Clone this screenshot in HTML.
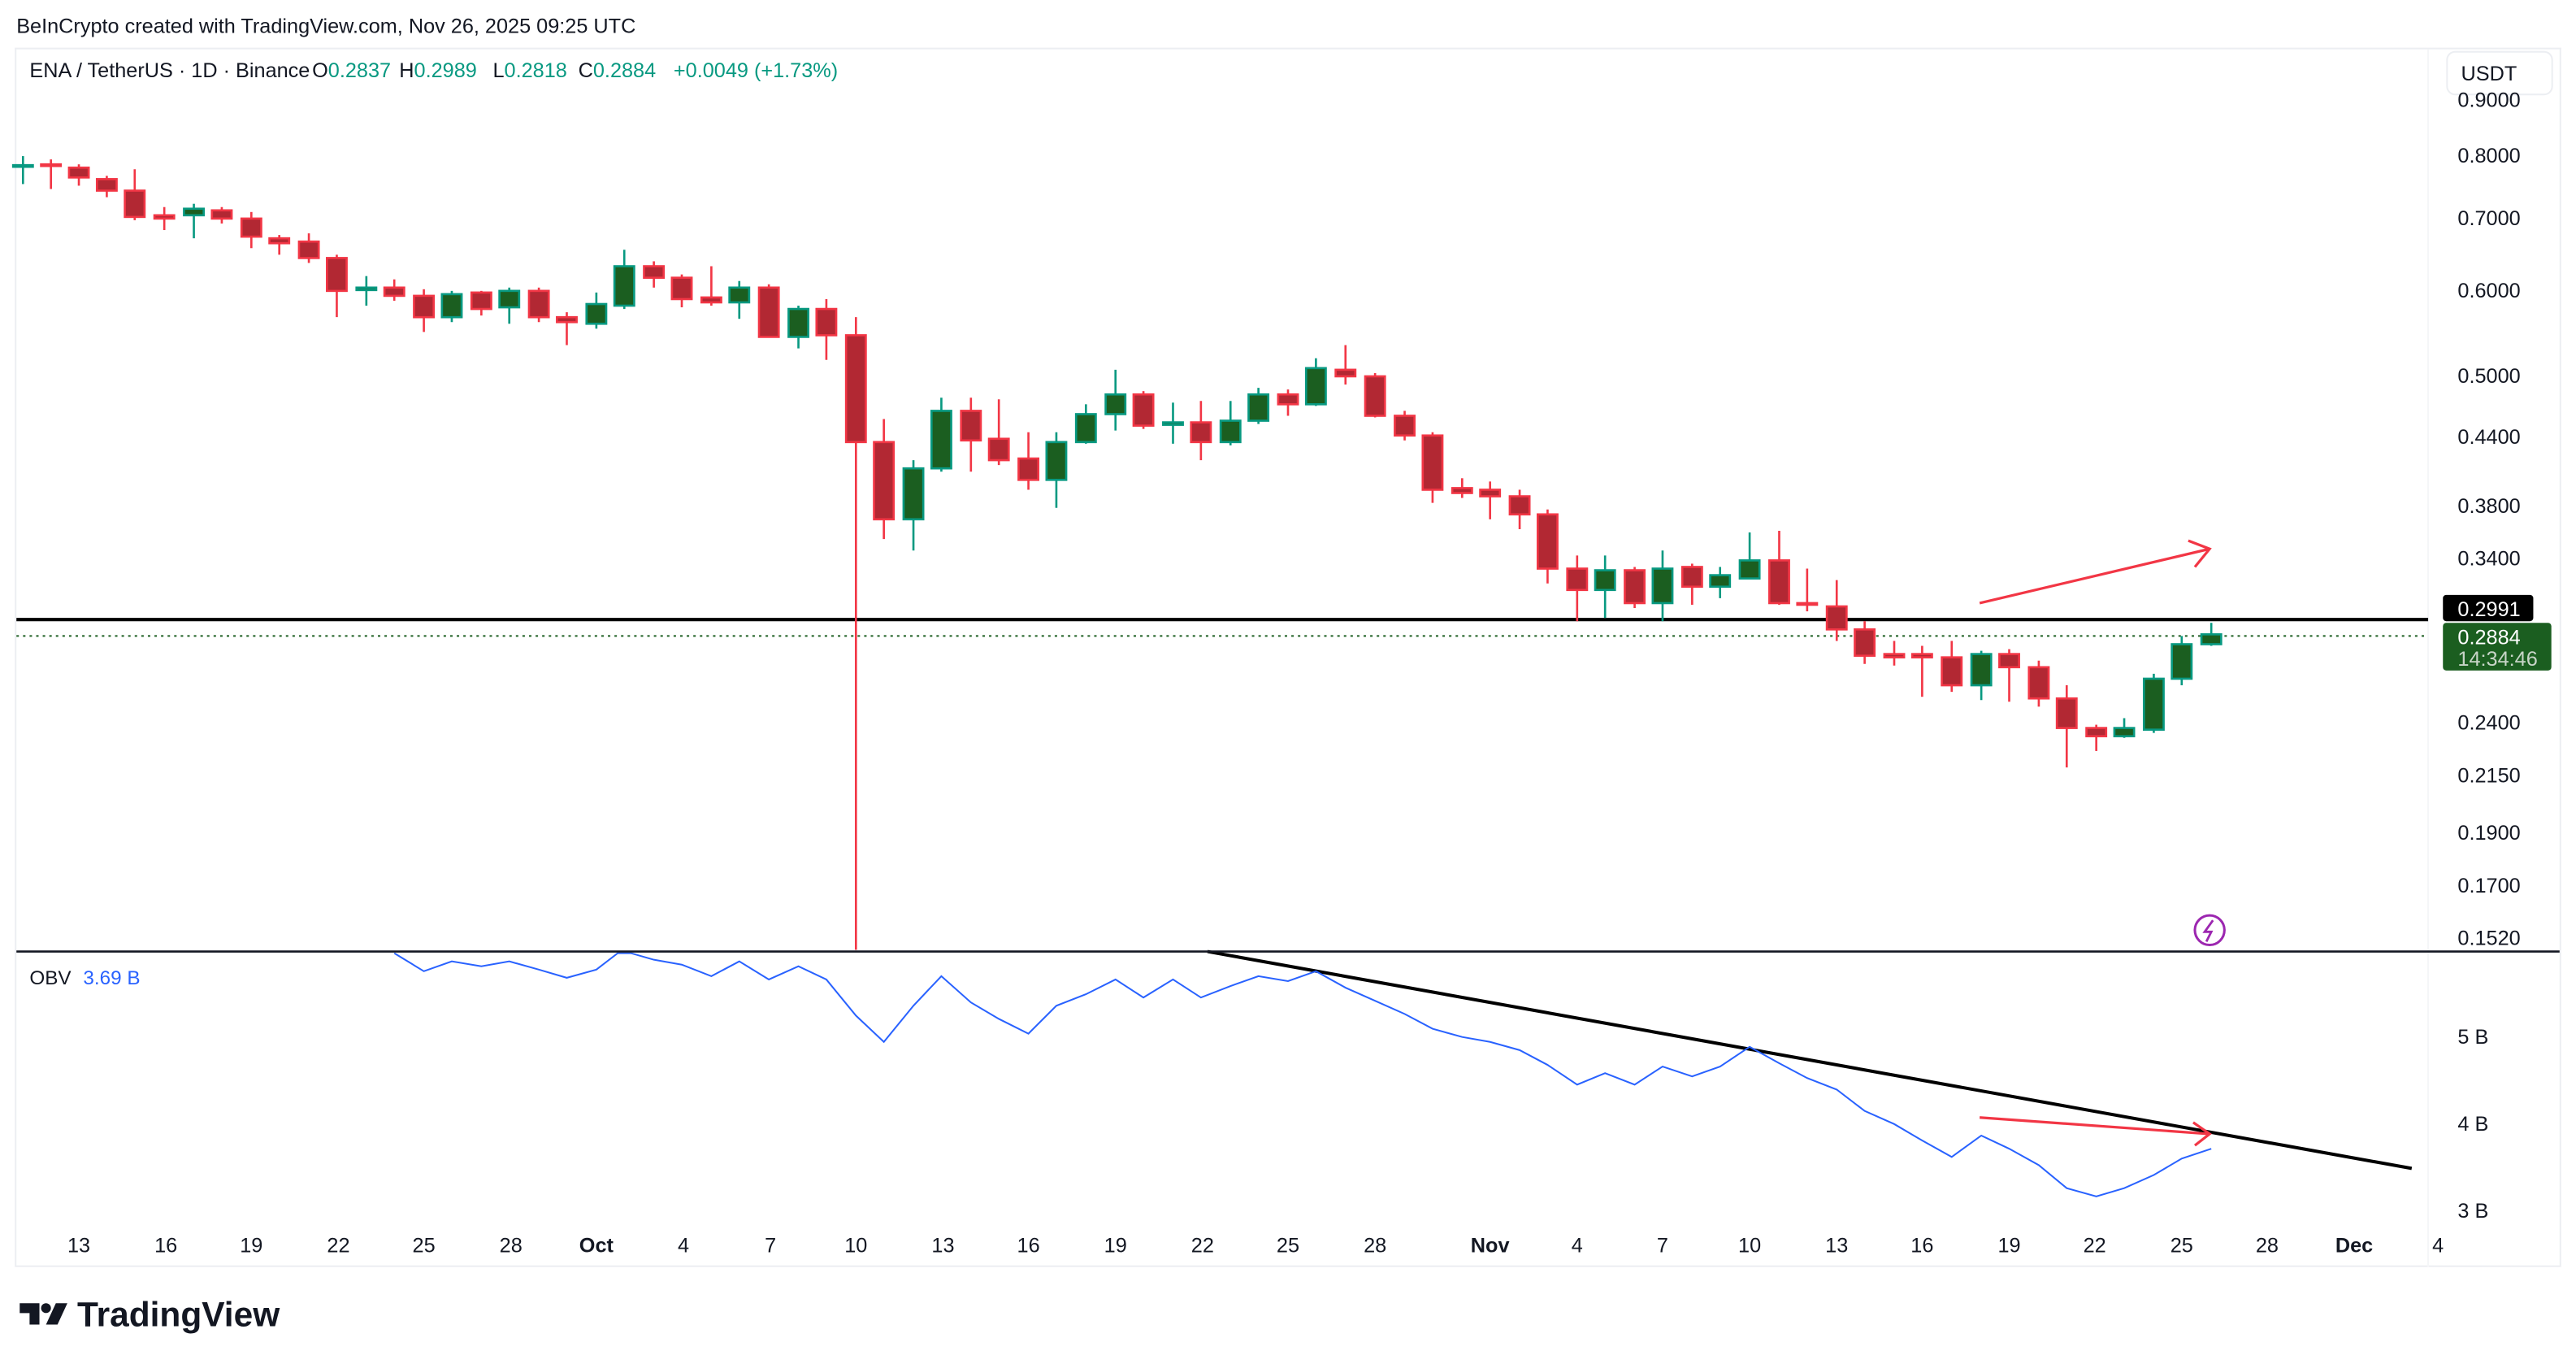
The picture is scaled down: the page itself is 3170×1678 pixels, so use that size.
<!DOCTYPE html>
<html><head><meta charset="utf-8"><style>
html,body{margin:0;padding:0;background:#fff;}
svg{display:block}
text{font-family:"Liberation Sans",sans-serif;}
.r line{stroke:#f23645;stroke-width:1.3}
.r rect{fill:#b22833;stroke:#f23645;stroke-width:1.3}
.g line{stroke:#089981;stroke-width:1.3}
.g rect{fill:#1b5e20;stroke:#089981;stroke-width:1.3}
.ax{font-size:12.5px;fill:#131722}
</style></head><body>
<svg width="3170" height="1678" viewBox="0 0 1568 830" preserveAspectRatio="none" xmlns="http://www.w3.org/2000/svg">
<rect width="1568" height="830" fill="#fff"/>
<text x="10" y="20" font-size="12.5" fill="#131722">BeInCrypto created with TradingView.com, Nov 26, 2025 09:25 UTC</text>
<rect x="9.5" y="29.5" width="1549" height="741" fill="none" stroke="#eceef2"/>
<line x1="1478" y1="30" x2="1478" y2="771" stroke="#f5f6f8"/>
<g font-size="12.5" fill="#131722">
<text x="18" y="47">ENA / TetherUS · 1D · Binance</text>
<text x="190" y="47">O<tspan fill="#089981">0.2837</tspan></text>
<text x="243" y="47">H<tspan fill="#089981">0.2989</tspan></text>
<text x="300" y="47">L<tspan fill="#089981">0.2818</tspan></text>
<text x="352" y="47">C<tspan fill="#089981">0.2884</tspan></text>
<text x="410" y="47" fill="#089981">+0.0049 (+1.73%)</text>
</g>
<line x1="735" y1="579" x2="1468" y2="711" stroke="#000" stroke-width="2"/>
<rect x="1489.5" y="31.5" width="64" height="26" rx="5" fill="#fff" stroke="#eceef2"/>
<text x="1498" y="49" font-size="12.5" fill="#131722">USDT</text>
<line x1="10" y1="387" x2="1478" y2="387" stroke="#1b5e20" stroke-dasharray="1.5 2.5" stroke-width="1"/>
<line x1="10" y1="377" x2="1478" y2="377" stroke="#000" stroke-width="2"/>
<line x1="521" y1="193" x2="521" y2="578" stroke="#f23645" stroke-width="1.3"/>
<g class="g"><line x1="14" y1="95" x2="14" y2="112"/><rect x="8" y="100.5" width="12" height="1"/></g>
<g class="r"><line x1="31" y1="97" x2="31" y2="115"/><rect x="25" y="100" width="12" height="1"/></g>
<g class="r"><line x1="48" y1="100" x2="48" y2="113"/><rect x="42" y="102" width="12" height="6"/></g>
<g class="r"><line x1="65" y1="107" x2="65" y2="120"/><rect x="59" y="109" width="12" height="7"/></g>
<g class="r"><line x1="82" y1="103" x2="82" y2="134"/><rect x="76" y="116" width="12" height="16"/></g>
<g class="r"><line x1="100" y1="126" x2="100" y2="140"/><rect x="94" y="131" width="12" height="2"/></g>
<g class="g"><line x1="118" y1="124" x2="118" y2="145"/><rect x="112" y="127" width="12" height="4"/></g>
<g class="r"><line x1="135" y1="126" x2="135" y2="136"/><rect x="129" y="128" width="12" height="5"/></g>
<g class="r"><line x1="153" y1="129" x2="153" y2="151"/><rect x="147" y="133" width="12" height="11"/></g>
<g class="r"><line x1="170" y1="143" x2="170" y2="155"/><rect x="164" y="145" width="12" height="3"/></g>
<g class="r"><line x1="188" y1="142" x2="188" y2="160"/><rect x="182" y="147" width="12" height="10"/></g>
<g class="r"><line x1="205" y1="155" x2="205" y2="193"/><rect x="199" y="157" width="12" height="20"/></g>
<g class="g"><line x1="223" y1="168" x2="223" y2="186"/><rect x="217" y="175" width="12" height="1.5"/></g>
<g class="r"><line x1="240" y1="170" x2="240" y2="183"/><rect x="234" y="175" width="12" height="5"/></g>
<g class="r"><line x1="258" y1="176" x2="258" y2="202"/><rect x="252" y="180" width="12" height="13"/></g>
<g class="g"><line x1="275" y1="177" x2="275" y2="196"/><rect x="269" y="179" width="12" height="14"/></g>
<g class="r"><line x1="293" y1="177" x2="293" y2="192"/><rect x="287" y="178" width="12" height="10"/></g>
<g class="g"><line x1="310" y1="175" x2="310" y2="197"/><rect x="304" y="177" width="12" height="10"/></g>
<g class="r"><line x1="328" y1="175" x2="328" y2="196"/><rect x="322" y="177" width="12" height="16"/></g>
<g class="r"><line x1="345" y1="190" x2="345" y2="210"/><rect x="339" y="193" width="12" height="3"/></g>
<g class="g"><line x1="363" y1="178" x2="363" y2="200"/><rect x="357" y="185" width="12" height="12"/></g>
<g class="g"><line x1="380" y1="152" x2="380" y2="188"/><rect x="374" y="162" width="12" height="24"/></g>
<g class="r"><line x1="398" y1="159" x2="398" y2="175"/><rect x="392" y="162" width="12" height="7"/></g>
<g class="r"><line x1="415" y1="167" x2="415" y2="187"/><rect x="409" y="169" width="12" height="13"/></g>
<g class="r"><line x1="433" y1="162" x2="433" y2="186"/><rect x="427" y="181" width="12" height="3"/></g>
<g class="g"><line x1="450" y1="171" x2="450" y2="194"/><rect x="444" y="175" width="12" height="9"/></g>
<g class="r"><line x1="468" y1="173" x2="468" y2="205"/><rect x="462" y="175" width="12" height="30"/></g>
<g class="g"><line x1="486" y1="186" x2="486" y2="212"/><rect x="480" y="188" width="12" height="17"/></g>
<g class="r"><line x1="503" y1="182" x2="503" y2="219"/><rect x="497" y="188" width="12" height="16"/></g>
<g class="r"><rect x="515" y="204" width="12" height="65"/></g>
<g class="r"><line x1="538" y1="255" x2="538" y2="328"/><rect x="532" y="269" width="12" height="47"/></g>
<g class="g"><line x1="556" y1="280" x2="556" y2="335"/><rect x="550" y="285" width="12" height="31"/></g>
<g class="g"><line x1="573" y1="242" x2="573" y2="287"/><rect x="567" y="250" width="12" height="35"/></g>
<g class="r"><line x1="591" y1="242" x2="591" y2="287"/><rect x="585" y="250" width="12" height="18"/></g>
<g class="r"><line x1="608" y1="243" x2="608" y2="283"/><rect x="602" y="267" width="12" height="13"/></g>
<g class="r"><line x1="626" y1="263" x2="626" y2="298"/><rect x="620" y="279" width="12" height="13"/></g>
<g class="g"><line x1="643" y1="263" x2="643" y2="309"/><rect x="637" y="269" width="12" height="23"/></g>
<g class="g"><line x1="661" y1="246" x2="661" y2="270"/><rect x="655" y="252" width="12" height="17"/></g>
<g class="g"><line x1="679" y1="225" x2="679" y2="262"/><rect x="673" y="240" width="12" height="12"/></g>
<g class="r"><line x1="696" y1="238" x2="696" y2="261"/><rect x="690" y="240" width="12" height="19"/></g>
<g class="g"><line x1="714" y1="245" x2="714" y2="270"/><rect x="708" y="257" width="12" height="1.5"/></g>
<g class="r"><line x1="731" y1="244" x2="731" y2="280"/><rect x="725" y="257" width="12" height="12"/></g>
<g class="g"><line x1="749" y1="244" x2="749" y2="271"/><rect x="743" y="256" width="12" height="13"/></g>
<g class="g"><line x1="766" y1="236" x2="766" y2="258"/><rect x="760" y="240" width="12" height="16"/></g>
<g class="r"><line x1="784" y1="237" x2="784" y2="253"/><rect x="778" y="240" width="12" height="6"/></g>
<g class="g"><line x1="801" y1="218" x2="801" y2="247"/><rect x="795" y="224" width="12" height="22"/></g>
<g class="r"><line x1="819" y1="210" x2="819" y2="234"/><rect x="813" y="225" width="12" height="4"/></g>
<g class="r"><line x1="837" y1="227" x2="837" y2="254"/><rect x="831" y="229" width="12" height="24"/></g>
<g class="r"><line x1="855" y1="250" x2="855" y2="268"/><rect x="849" y="253" width="12" height="12"/></g>
<g class="r"><line x1="872" y1="263" x2="872" y2="306"/><rect x="866" y="265" width="12" height="33"/></g>
<g class="r"><line x1="890" y1="291" x2="890" y2="303"/><rect x="884" y="297" width="12" height="3"/></g>
<g class="r"><line x1="907" y1="293" x2="907" y2="316"/><rect x="901" y="298" width="12" height="4"/></g>
<g class="r"><line x1="925" y1="298" x2="925" y2="322"/><rect x="919" y="302" width="12" height="11"/></g>
<g class="r"><line x1="942" y1="310" x2="942" y2="355"/><rect x="936" y="313" width="12" height="33"/></g>
<g class="r"><line x1="960" y1="338" x2="960" y2="378"/><rect x="954" y="346" width="12" height="13"/></g>
<g class="g"><line x1="977" y1="338" x2="977" y2="376"/><rect x="971" y="347" width="12" height="12"/></g>
<g class="r"><line x1="995" y1="345" x2="995" y2="370"/><rect x="989" y="347" width="12" height="20"/></g>
<g class="g"><line x1="1012" y1="335" x2="1012" y2="378"/><rect x="1006" y="346" width="12" height="21"/></g>
<g class="r"><line x1="1030" y1="343" x2="1030" y2="368"/><rect x="1024" y="345" width="12" height="12"/></g>
<g class="g"><line x1="1047" y1="345" x2="1047" y2="364"/><rect x="1041" y="350" width="12" height="7"/></g>
<g class="g"><line x1="1065" y1="324" x2="1065" y2="352"/><rect x="1059" y="341" width="12" height="11"/></g>
<g class="r"><line x1="1083" y1="323" x2="1083" y2="368"/><rect x="1077" y="341" width="12" height="26"/></g>
<g class="r"><line x1="1100" y1="346" x2="1100" y2="372"/><rect x="1094" y="367" width="12" height="1"/></g>
<g class="r"><line x1="1118" y1="353" x2="1118" y2="390"/><rect x="1112" y="369" width="12" height="14"/></g>
<g class="r"><line x1="1135" y1="378" x2="1135" y2="404"/><rect x="1129" y="383" width="12" height="16"/></g>
<g class="r"><line x1="1153" y1="390" x2="1153" y2="405"/><rect x="1147" y="398" width="12" height="2"/></g>
<g class="r"><line x1="1170" y1="393" x2="1170" y2="424"/><rect x="1164" y="398" width="12" height="2"/></g>
<g class="r"><line x1="1188" y1="390" x2="1188" y2="421"/><rect x="1182" y="400" width="12" height="17"/></g>
<g class="g"><line x1="1206" y1="396" x2="1206" y2="426"/><rect x="1200" y="398" width="12" height="19"/></g>
<g class="r"><line x1="1223" y1="395" x2="1223" y2="427"/><rect x="1217" y="398" width="12" height="8"/></g>
<g class="r"><line x1="1241" y1="402" x2="1241" y2="430"/><rect x="1235" y="406" width="12" height="19"/></g>
<g class="r"><line x1="1258" y1="417" x2="1258" y2="467"/><rect x="1252" y="425" width="12" height="18"/></g>
<g class="r"><line x1="1276" y1="441" x2="1276" y2="457"/><rect x="1270" y="443" width="12" height="5"/></g>
<g class="g"><line x1="1293" y1="437" x2="1293" y2="449"/><rect x="1287" y="443" width="12" height="5"/></g>
<g class="g"><line x1="1311" y1="410" x2="1311" y2="446"/><rect x="1305" y="413" width="12" height="31"/></g>
<g class="g"><line x1="1328" y1="387" x2="1328" y2="417"/><rect x="1322" y="392" width="12" height="21"/></g>
<g class="g"><line x1="1346" y1="379" x2="1346" y2="393"/><rect x="1340" y="386" width="12" height="6"/></g>
<circle cx="1345" cy="566" r="9" fill="none" stroke="#9c27b0" stroke-width="1.5"/>
<path d="M1347 560 L1342 567 L1346 567 L1343 573" fill="none" stroke="#9c27b0" stroke-width="1.4"/>
<path d="M1205 367 L1345 334 M1332 329 L1345 334 L1336 345" fill="none" stroke="#f23645" stroke-width="1.6"/>
<polyline fill="none" stroke="#2962ff" stroke-width="1" points="240,580 258,591 275,585 293,588 310,585 328,590 345,595 363,590 376,580 384,580 398,584 415,587 433,594 450,585 468,596 486,588 503,596 521,618 538,634 556,612 573,594 591,610 608,620 626,629 643,612 661,605 679,596 696,607 714,596 731,607 749,600 766,594 784,597 801,591 819,601 837,609 855,617 872,626 890,631 907,634 925,639 942,648 960,660 977,653 995,660 1012,649 1030,655 1047,649 1065,637 1083,647 1100,656 1118,663 1135,676 1153,684 1170,694 1188,704 1206,691 1223,699 1241,709 1258,723 1276,728 1293,723 1311,715 1328,705 1346,699"/>
<line x1="10" y1="579" x2="1558" y2="579" stroke="#131722" stroke-width="1.3"/>
<text x="18" y="599" font-size="12" fill="#131722">OBV <tspan dx="4" fill="#2962ff">3.69 B</tspan></text>
<path d="M1205 680 L1345 690 M1335 683 L1345 690 L1336 697" fill="none" stroke="#f23645" stroke-width="1.6"/>
<rect x="1487" y="362" width="55" height="16" rx="2" fill="#000"/>
<text x="1496" y="375" font-size="12.5" fill="#fff">0.2991</text>
<g class="ax">
<text x="1496" y="65">0.9000</text><text x="1496" y="99">0.8000</text><text x="1496" y="137">0.7000</text><text x="1496" y="181">0.6000</text><text x="1496" y="233">0.5000</text><text x="1496" y="270">0.4400</text><text x="1496" y="312">0.3800</text><text x="1496" y="344">0.3400</text><text x="1496" y="444">0.2400</text><text x="1496" y="476">0.2150</text><text x="1496" y="511">0.1900</text><text x="1496" y="543">0.1700</text><text x="1496" y="575">0.1520</text>
<text x="1496" y="635">5 B</text><text x="1496" y="688">4 B</text><text x="1496" y="741">3 B</text>
<text x="48" y="762" text-anchor="middle">13</text><text x="101" y="762" text-anchor="middle">16</text><text x="153" y="762" text-anchor="middle">19</text><text x="206" y="762" text-anchor="middle">22</text><text x="258" y="762" text-anchor="middle">25</text><text x="311" y="762" text-anchor="middle">28</text><text x="363" y="762" text-anchor="middle" font-weight="bold">Oct</text><text x="416" y="762" text-anchor="middle">4</text><text x="469" y="762" text-anchor="middle">7</text><text x="521" y="762" text-anchor="middle">10</text><text x="574" y="762" text-anchor="middle">13</text><text x="626" y="762" text-anchor="middle">16</text><text x="679" y="762" text-anchor="middle">19</text><text x="732" y="762" text-anchor="middle">22</text><text x="784" y="762" text-anchor="middle">25</text><text x="837" y="762" text-anchor="middle">28</text><text x="907" y="762" text-anchor="middle" font-weight="bold">Nov</text><text x="960" y="762" text-anchor="middle">4</text><text x="1012" y="762" text-anchor="middle">7</text><text x="1065" y="762" text-anchor="middle">10</text><text x="1118" y="762" text-anchor="middle">13</text><text x="1170" y="762" text-anchor="middle">16</text><text x="1223" y="762" text-anchor="middle">19</text><text x="1275" y="762" text-anchor="middle">22</text><text x="1328" y="762" text-anchor="middle">25</text><text x="1380" y="762" text-anchor="middle">28</text><text x="1433" y="762" text-anchor="middle" font-weight="bold">Dec</text><text x="1484" y="762" text-anchor="middle">4</text>
</g>
<rect x="1487" y="379" width="66" height="29" rx="2" fill="#1b5e20"/>
<text x="1496" y="392" font-size="12.5" fill="#fff">0.2884</text>
<text x="1496" y="405" font-size="12.5" fill="#c8d5c8">14:34:46</text>
<g fill="#131722">
<path d="M12 793 h12 v13 h-6 v-7 h-6 z"/>
<circle cx="28" cy="796" r="3"/>
<path d="M34 793 h7 l-6 13 h-7 z"/>
</g>
<text x="47" y="807" font-size="21" font-weight="bold" fill="#131722">TradingView</text>
</svg>
</body></html>
